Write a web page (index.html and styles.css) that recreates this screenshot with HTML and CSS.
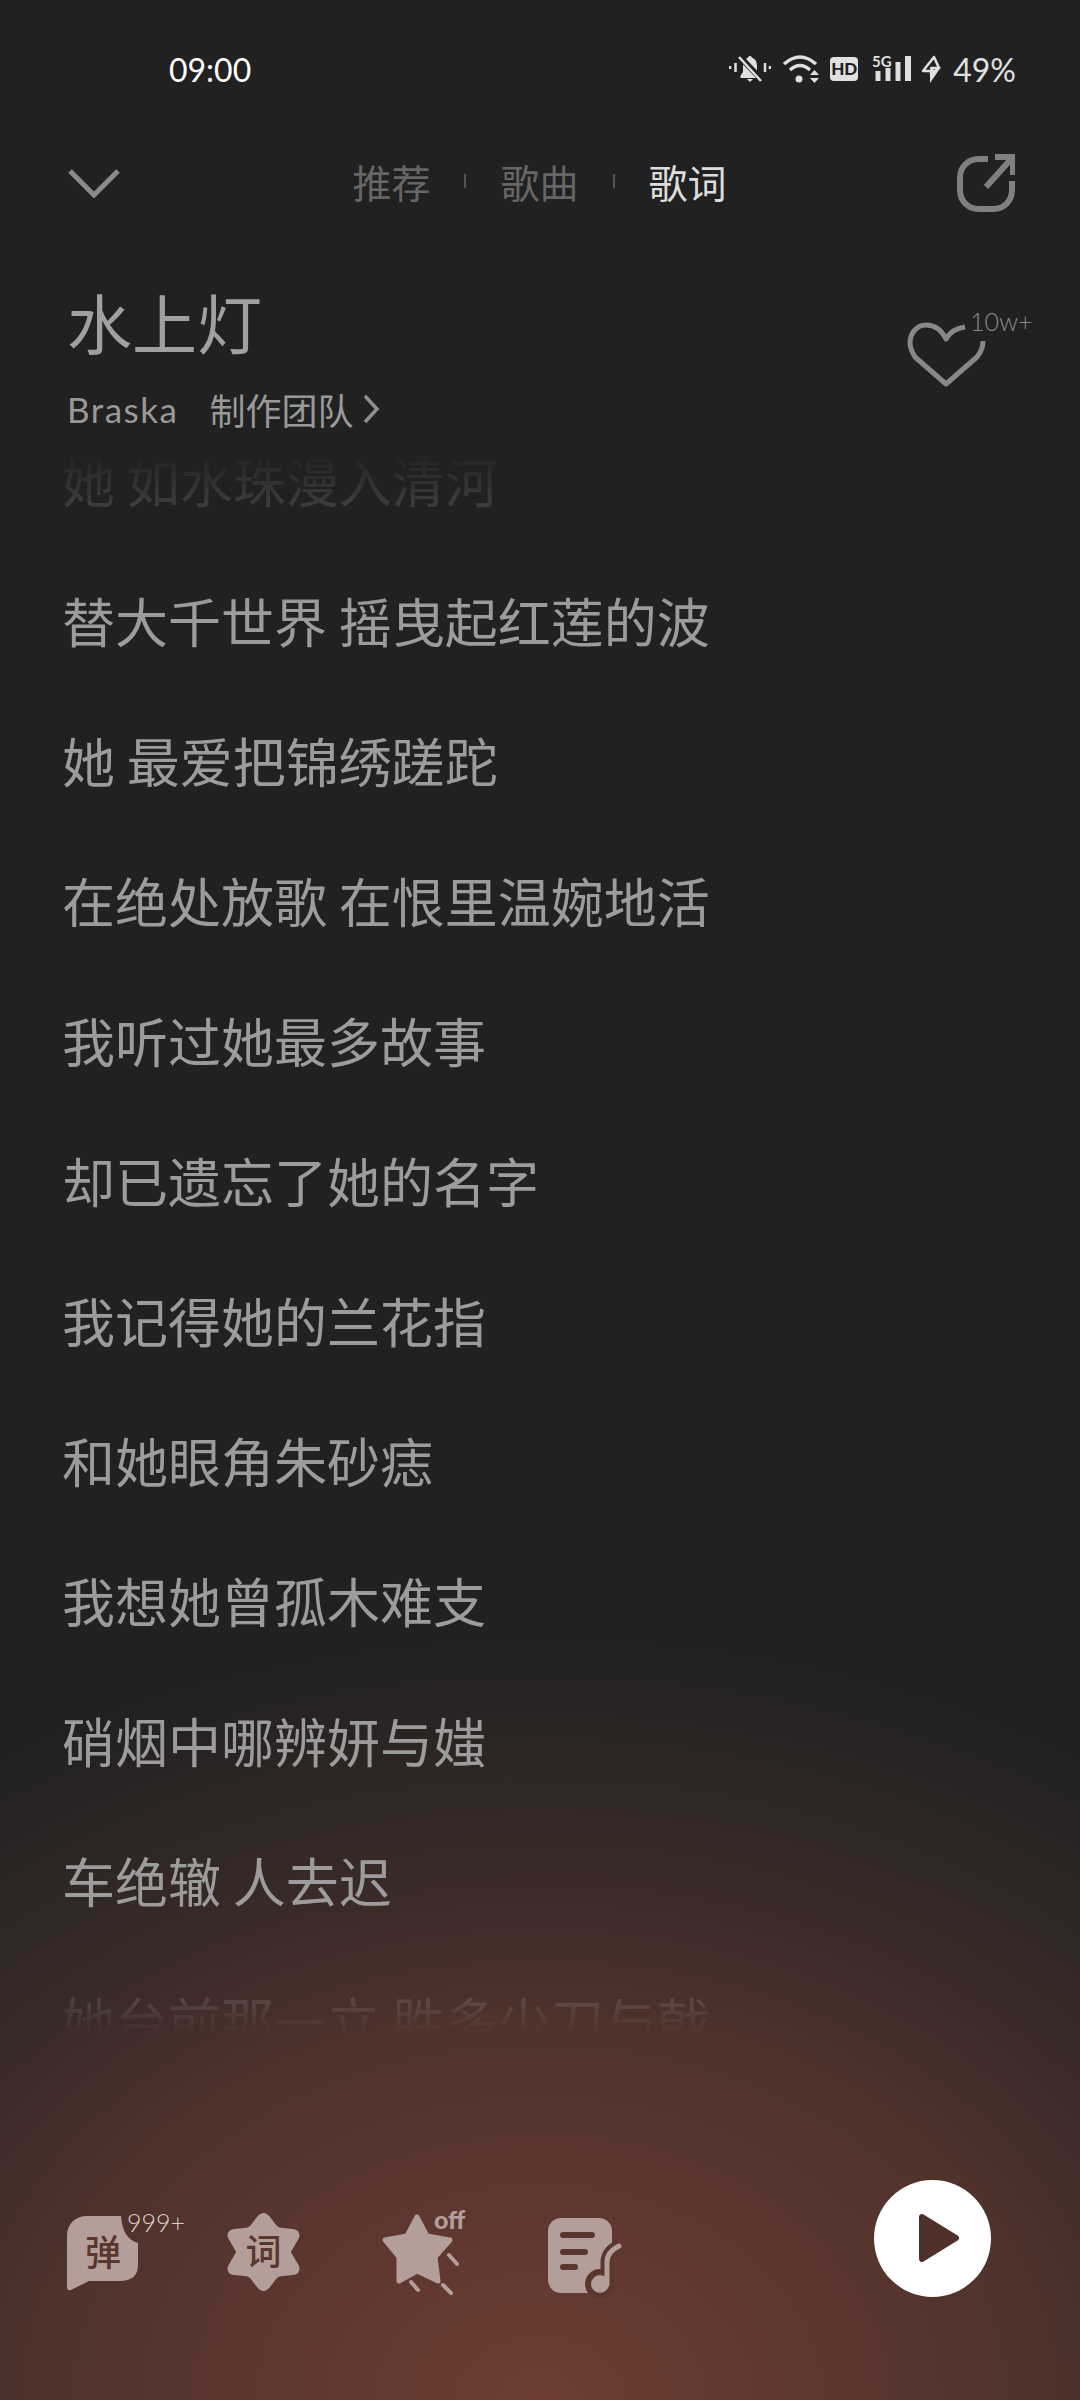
FILE: index.html
```html
<!DOCTYPE html>
<html lang="zh-CN">
<head>
    <meta charset="UTF-8">
    <meta name="viewport" content="width=device-width, initial-scale=1.0">
    <title>水上灯</title>
    <link rel="stylesheet" href="styles.css">
</head>
<body>
    <div class="status">
        <span class="time">09:00</span>
        <div class="status-icons">
            <svg width="42" height="30" viewBox="0 0 42 30">
                <path d="M21 2c-1.3 0-2 .9-2 1.8C15.5 5 14 8 14 12v6l-2.5 3.5V24h19v-2.5L28 18v-6c0-4-1.500-7-5-8.200C23 2.900 22.300 2 21 2z" fill="#e0e0e0"/>
                <path d="M18 25h6l-3 3z" fill="#e0e0e0"/>
                <path d="M10 2l24 25" stroke="#212121" stroke-width="6"/>
                <path d="M10 3l22 24" stroke="#e0e0e0" stroke-width="2.500"/>
                <path d="M1 12v3M6.500 9v9M36 9v9M41 12v3" stroke="#e0e0e0" stroke-width="2.500"/>
            </svg>
            <svg class="wifi" width="38" height="30" viewBox="0 0 38 30">
                <path d="M2 10Q18-4 34 10M8 16Q18 7 28 16" fill="none" stroke="#e0e0e0" stroke-width="3.500"/>
                <circle cx="17" cy="25" r="3.500" fill="#e0e0e0"/>
                <path d="M28 21l4.500-5 4.500 5zM28 24h9l-4.500 5z" fill="#e0e0e0"/>
            </svg>
            <span class="hd">HD</span>
            <svg class="sig" width="40" height="30" viewBox="0 0 40 30">
                <text class="five-g" x="1" y="13">5G</text>
                <path d="M4.500 17h5v10h-5zM14.500 14h5v13h-5zM24.500 8h5v19h-5zM34 2h6v25h-6z" fill="#e0e0e0"/>
            </svg>
            <svg class="bolt" width="21" height="28" viewBox="0 0 21 28">
                <path d="M13 2L2 16h8v3l2-3-2-3h8z" fill="none" stroke="#e0e0e0" stroke-width="2.500" stroke-linejoin="round"/>
                <path d="M9 15h5v-3h6L9 28z" fill="#e0e0e0"/>
            </svg>
            <span class="batt">49%</span>
        </div>
    </div>

    <div class="topbar">
        <svg width="52" height="30" viewBox="0 0 52 30">
            <path d="M2 3l24 24L50 3" fill="none" stroke="#8a8a8a" stroke-width="5"/>
        </svg>
        <nav class="tabs">
            <span class="tab">推荐</span>
            <i class="sep"></i>
            <span class="tab">歌曲</span>
            <i class="sep"></i>
            <span class="tab active">歌词</span>
        </nav>
        <svg width="58" height="58" viewBox="0 0 58 58">
            <path d="M31 5H22C11 5 3 13 3 24V36C3 47 11 55 22 55H36C47 55 55 47 55 36V27" fill="none" stroke="#808080" stroke-width="6"/>
            <path d="M29 33L55 4M38 3H56V21" fill="none" stroke="#808080" stroke-width="6"/>
        </svg>
    </div>

    <div class="song">
        <div>
            <h1 class="song-title">水上灯</h1>
            <div class="song-meta">
                <span class="artist">Braska</span>
                <span class="team">制作团队</span>
                <svg width="18" height="32" viewBox="0 0 18 32">
                    <path d="M3 3l12 13L3 29" fill="none" stroke="#8f8f8f" stroke-width="3.500"/>
                </svg>
            </div>
        </div>
        <div class="like">
            <svg width="80" height="68" viewBox="0 0 80 68">
                <path d="M58 6C50 7 43 11 39 18C35 10 28 4 19 4C10 4 3 12 3 22C3 27 5 31 8 36L39 63L70 36C74 31 76 26 76 20" fill="none" stroke="#888" stroke-width="5" stroke-linejoin="round"/>
            </svg>
            <span class="like-count">10w+</span>
        </div>
    </div>

    <div class="lyrics">
        <p>她 如水珠漫入清河</p>
        <p>替大千世界 摇曳起红莲的波</p>
        <p>她 最爱把锦绣蹉跎</p>
        <p>在绝处放歌 在恨里温婉地活</p>
        <p>我听过她最多故事</p>
        <p>却已遗忘了她的名字</p>
        <p>我记得她的兰花指</p>
        <p>和她眼角朱砂痣</p>
        <p>我想她曾孤木难支</p>
        <p>硝烟中哪辨妍与媸</p>
        <p>车绝辙 人去迟</p>
        <p>她台前那一立 胜多少刀与戟</p>
    </div>

    <div class="controls">
        <div class="ctl-group">
            <div class="ctl">
                <svg width="80" height="90" viewBox="0 0 80 90">
                    <path class="ic" d="M22 6H56C57 20 62 30 73 33V55C73 66 66 71 55 71H24L6 80Q2 81 2 77V26C2 14 10 6 22 6Z"/>
                    <text class="ic-text" x="38" y="56">弹</text>
                </svg>
                <span class="badge">999+</span>
            </div>
            <div class="ctl">
                <svg width="80" height="90" viewBox="0 0 80 90">
                    <path class="ic" d="M32 7Q38.500-1 45 7L52 16Q54 18 58 18L68 19Q76 20 74 28L67 40Q65 42 67 44L74 56Q76 64 68 65L58 66Q54 66 52 68L45 77Q38.500 85 32 77L25 68Q23 66 19 66L9 65Q1 64 3 56L10 44Q12 42 10 40L3 28Q1 20 9 19L19 18Q23 18 25 16Z"/>
                    <text class="ic-text" x="38.500" y="55">词</text>
                </svg>
            </div>
            <div class="ctl">
                <svg width="80" height="90" viewBox="0 0 80 90">
                    <path class="ic star" d="M32 7L42 26L65 30L50 47L53 71L32 61L14 71L14 47L0 30L22 26Z"/>
                    <path class="dash" d="M64 45L72 54M26 72L33 80M58 75L66 83"/>
                </svg>
                <span class="off">off</span>
            </div>
            <div class="ctl">
                <svg width="80" height="90" viewBox="0 0 80 90">
                    <rect class="ic" x="3" y="8" width="64" height="75" rx="13"/>
                    <path class="bar" d="M18 25H47M18 42H40M18 57H30"/>
                    <circle cx="55" cy="74" r="15" fill="#5b362f"/>
                    <path d="M62 74V52Q62 42 74 36" fill="none" stroke="#5b362f" stroke-width="13"/>
                    <circle class="ic" cx="55" cy="74" r="9"/>
                    <path d="M62 74V52Q62 42 74 36" fill="none" stroke="#b39e99" stroke-width="5" stroke-linecap="round"/>
                </svg>
            </div>
        </div>
        <div class="play">
            <svg width="117" height="117" viewBox="0 0 117 117">
                <path d="M48 37L82 58L48 79Z" fill="#4f2f2a" stroke="#4f2f2a" stroke-width="6" stroke-linejoin="round"/>
            </svg>
        </div>
    </div>
</body>
</html>
```

FILE: styles.css
```css
* {
    box-sizing: border-box;
}
html, body {
    margin: 0;
    padding: 0;
}
body {
    width: 1080px;
    height: 2400px;
    overflow: hidden;
    font-family: "Lato", "Noto Sans CJK SC", sans-serif;
    background: radial-gradient(ellipse 1000px 760px at 50% 100%, #6d3d33 0%, #5b362f 30%, #4f322c 50%, #3a2b28 68%, #212121 100%) #212121;
}
svg {
    display: block;
}

.status {
    height: 138px;
    padding: 0 64px 0 169px;
    display: flex;
    align-items: center;
    justify-content: space-between;
}
.time {
    color: #fff;
    font-size: 32px;
}
.status-icons {
    display: flex;
    align-items: center;
    color: #e0e0e0;
}
.wifi {
    margin-left: 11px;
}
.hd {
    width: 28px;
    height: 24px;
    margin-left: 10px;
    border-radius: 4px;
    background: #e0e0e0;
    color: #212121;
    font-size: 17px;
    font-weight: 900;
    line-height: 24px;
    text-align: center;
}
.sig {
    margin-left: 13px;
    overflow: visible;
}
.five-g {
    font-size: 15px;
    font-weight: 700;
    fill: #e0e0e0;
}
.bolt {
    margin-left: 10px;
}
.batt {
    margin-left: 11px;
    font-size: 32px;
}

.topbar {
    height: 90px;
    padding: 0 65px 0 68px;
    display: flex;
    align-items: center;
    justify-content: space-between;
}
.tabs {
    margin-bottom: 5px;
    margin-left: 2px;
    display: flex;
    align-items: center;
}
.tab {
    font-family: "Noto Sans CJK SC", sans-serif;
    font-size: 39px;
    color: #666;
}
.tab.active {
    color: #ddd;
}
.sep {
    width: 2px;
    height: 14px;
    margin: 0 34px;
    background: #555;
}

.song {
    height: 182px;
    padding: 0 50px 0 67px;
    display: flex;
    justify-content: space-between;
    font-family: "Noto Sans CJK SC", sans-serif;
}
.song-title {
    margin: 0;
    padding-top: 45px;
    font-size: 65px;
    font-weight: 400;
    line-height: 96px;
    color: #a0a0a0;
}
.song-meta {
    margin-top: 14px;
    display: flex;
    align-items: center;
    color: #999;
}
.artist {
    font-family: "Lato", sans-serif;
    font-size: 35px;
    letter-spacing: 1.5px;
}
.team {
    margin-left: 31px;
    margin-right: 9px;
    font-size: 36px;
}
.like {
    position: relative;
    margin-top: 93px;
    margin-right: 43px;
}
.like-count {
    position: absolute;
    left: 63px;
    top: -15px;
    font-family: "Lato", sans-serif;
    font-size: 25px;
    font-weight: 300;
    color: #8a8a8a;
}

.lyrics {
    height: 1630px;
    padding-left: 62px;
    overflow: hidden;
    font-family: "Noto Sans CJK SC", sans-serif;
    font-size: 53px;
    line-height: 140px;
    color: #9c9c9c;
    -webkit-mask-image: linear-gradient(to bottom, rgba(0,0,0,0.04) 50px, rgba(0,0,0,0.25) 100px, #000 195px, #000 1495px, rgba(0,0,0,0.25) 1585px, transparent 1625px);
    mask-image: linear-gradient(to bottom, rgba(0,0,0,0.04) 50px, rgba(0,0,0,0.25) 100px, #000 195px, #000 1495px, rgba(0,0,0,0.25) 1585px, transparent 1625px);
}
.lyrics p {
    margin: 0;
    height: 140px;
}

.controls {
    margin-top: 140px;
    padding: 0 89px 0 65px;
    display: flex;
    justify-content: space-between;
    align-items: flex-start;
}
.ctl-group {
    display: flex;
    gap: 80px;
    padding-top: 30px;
}
.ctl {
    position: relative;
    width: 80px;
    height: 90px;
}
.ctl svg {
    overflow: visible;
}
.ic {
    fill: #b39e99;
}
.star {
    stroke: #b39e99;
    stroke-width: 5;
    stroke-linejoin: round;
}
.dash {
    fill: none;
    stroke: #b39e99;
    stroke-width: 4;
    stroke-linecap: round;
}
.bar {
    fill: none;
    stroke: #5b362f;
    stroke-width: 6;
    stroke-linecap: round;
}
.ic-text {
    font-family: "Noto Sans CJK SC", sans-serif;
    font-size: 36px;
    font-weight: 500;
    fill: #5b362f;
    text-anchor: middle;
}
.badge {
    position: absolute;
    left: 62px;
    top: -3px;
    font-size: 25px;
    font-weight: 300;
    color: #dcd0cd;
}
.off {
    position: absolute;
    left: 49px;
    top: -6px;
    font-size: 25px;
    font-weight: 900;
    color: #b39e99;
}
.play {
    width: 117px;
    height: 117px;
    border-radius: 50%;
    background: #fff;
}
```
